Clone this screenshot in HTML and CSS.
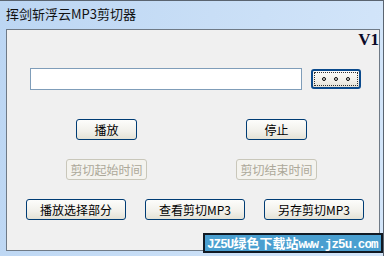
FILE: index.html
```html
<!DOCTYPE html>
<html lang="zh-CN">

<head>
    <meta charset="UTF-8">
    <title>挥剑斩浮云MP3剪切器</title>
    <link rel="stylesheet" href="styles.css">
</head>

<body>
    <div class="window">
        <div class="titlebar">挥剑斩浮云MP3剪切器</div>
        <div class="client">
            <div class="version-row"><span class="version">V1</span></div>

            <!-- 文件选择 -->
            <div class="row row-file">
                <input type="text" class="file-path">
                <button type="button" class="btn btn-default btn-browse">
                    <span class="dot"></span><span class="dot"></span><span class="dot"></span>
                </button>
            </div>

            <div class="row row-play">
                <button type="button" class="btn btn-small">播放</button>
                <button type="button" class="btn btn-small">停止</button>
            </div>

            <div class="row row-mark">
                <button type="button" class="btn btn-mid" disabled>剪切起始时间</button>
                <button type="button" class="btn btn-mid" disabled>剪切结束时间</button>
            </div>

            <div class="row row-actions">
                <button type="button" class="btn btn-wide">播放选择部分</button>
                <button type="button" class="btn btn-wide">查看剪切MP3</button>
                <button type="button" class="btn btn-wide">另存剪切MP3</button>
            </div>
        </div>
        <div class="watermark"><span class="latin">JZ5U</span>绿色下载站<span class="latin">www.jz5u.com</span></div>
    </div>
</body>

</html>
```

FILE: styles.css
```css
body {
    margin: 0;
    padding: 0;
    font-family: "Noto Sans CJK SC", sans-serif;
    background-color: #ffffff;
}

.window {
    position: relative;
    width: 384px;
    height: 256px;
    box-sizing: border-box;
    border-top: 1px solid #5a6470;
    border-right: 1px solid #5a6470;
    background: linear-gradient(100deg, #bcd6f3 0%, #c8def6 50%, #d4e6fa 100%);
}

.titlebar {
    height: 28px;
    padding-left: 6px;
    font-size: 13px;
    line-height: 26px;
    color: #111111;
}

.client {
    margin: 0 3px 0 6px;
    height: 222px;
    box-sizing: border-box;
    border: 1px solid #6f7a86;
    background-color: #f0f0f0;
}

.version-row {
    display: flex;
    justify-content: flex-end;
    height: 22px;
}

.version {
    font-family: "Liberation Serif", serif;
    font-weight: bold;
    font-size: 17px;
    line-height: 20px;
    color: #0a0a28;
}

.row {
    display: flex;
    align-items: center;
}

.row-file {
    margin-top: 16px;
    padding-left: 23px;
    gap: 9px;
}

.row-play {
    margin-top: 29px;
    padding-left: 69px;
    gap: 109px;
}

.row-mark {
    margin-top: 19px;
    padding-left: 59px;
    gap: 89px;
}

.row-actions {
    margin-top: 19px;
    padding-left: 19px;
    gap: 19px;
}

.file-path {
    width: 272px;
    height: 22px;
    margin: 0;
    padding: 0;
    box-sizing: border-box;
    border: 1px solid #7f9db9;
    background-color: #ffffff;
}

.btn {
    height: 21px;
    margin: 0;
    padding: 0;
    box-sizing: border-box;
    border: 1px solid #003c74;
    border-radius: 3px;
    background: linear-gradient(#fdfdfb, #f1f0ea 60%, #e4e2d6);
    font-family: "Noto Sans CJK SC", sans-serif;
    font-size: 12px;
    line-height: 18px;
    color: #000000;
}

.btn:disabled {
    border-color: #c9c7ba;
    background: #f4f3ee;
    color: #aca899;
}

.btn-small {
    width: 61px;
}

.btn-mid {
    width: 81px;
}

.btn-wide {
    width: 100px;
}

.btn-browse {
    position: relative;
    width: 50px;
    height: 20px;
    display: flex;
    align-items: center;
    justify-content: center;
    gap: 8px;
    border: 2px solid #0a4a8c;
    border-radius: 3px;
}

.btn-browse::after {
    content: "";
    position: absolute;
    left: 1px;
    top: 1px;
    right: 1px;
    bottom: 1px;
    border: 1px dotted #333333;
}

.dot {
    width: 4px;
    height: 4px;
    border: 1px solid #000000;
    border-radius: 50%;
    box-sizing: border-box;
}

.watermark {
    position: absolute;
    left: 203px;
    top: 232px;
    width: 180px;
    height: 20px;
    box-sizing: border-box;
    border: 2px solid #111a24;
    background-color: #4a9fd0;
    color: #ffffff;
    font-weight: bold;
    font-size: 13px;
    line-height: 16px;
    padding-left: 2px;
    white-space: nowrap;
    overflow: hidden;
}

.watermark .latin {
    font-family: "Liberation Mono", monospace;
    font-size: 12.5px;
    letter-spacing: -0.9px;
}
```
